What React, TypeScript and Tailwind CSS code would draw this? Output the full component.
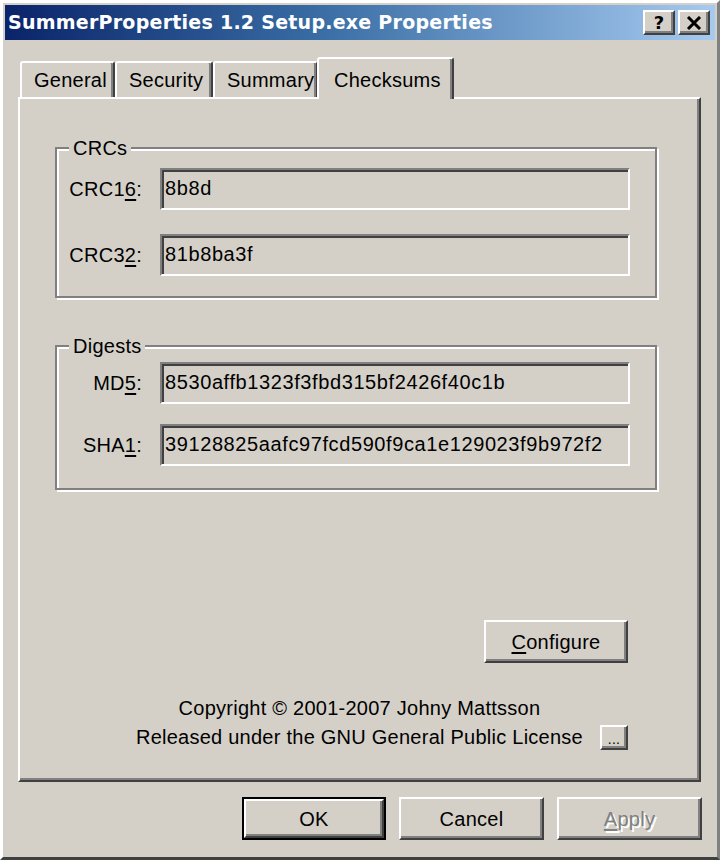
const raised =
  "border-2 border-t-white border-l-white border-b-[#404040] border-r-[#404040] shadow-[inset_-2px_-2px_0_#808080] bg-[#d4d0c8]";
const sunken =
  "border-2 border-t-[#808080] border-l-[#808080] border-b-white border-r-white shadow-[inset_2px_2px_0_#404040] bg-[#d4d0c8]";
const etched =
  "relative border-2 border-[#808080] shadow-[inset_2px_2px_0_#fff,2px_2px_0_#fff]";

function Field({ label, hot, value }: { label: string; hot: string; value: string }) {
  return (
    <div className="flex items-center">
      <div className="w-[86px] text-right pr-[3px]">
        {label}
        <span className="underline underline-offset-[3px]">{hot}</span>:
      </div>
      <div className={`ml-[15px] h-[42px] w-[470px] pl-[3px] pt-[6px] leading-[24px] tracking-[0.6px] ${sunken}`}>
        {value}
      </div>
    </div>
  );
}

function Group({ title, children, className }: { title: string; children: React.ReactNode; className: string }) {
  return (
    <div className={`${etched} ${className}`}>
      <div className="absolute left-[12px] top-[-15px] bg-[#d4d0c8] px-[4px] leading-[28px]">{title}</div>
      {children}
    </div>
  );
}

export default function App() {
  const tabs = [
    { name: "General", w: "w-[95px]" },
    { name: "Security", w: "w-[98px]" },
    { name: "Summary", w: "w-[105px]" },
  ];

  return (
    <div className="w-[720px] h-[860px] bg-[#d4d0c8] border-[3px] border-t-white border-l-white border-r-[#808080] border-b-[#404040] p-[2px] flex flex-col text-[20px] tracking-[0.25px] text-black font-['Liberation_Sans',Arial,sans-serif]">
      {/* title bar */}
      <div className="h-[35px] shrink-0 flex items-center justify-between pl-[3px] pr-[5px] bg-[linear-gradient(90deg,#0a246a_0%,#3a6ea5_45%,#a6caf0_100%)]">
        <span className="text-white font-bold text-[19px] font-['DejaVu_Sans',sans-serif] tracking-[0.25px]">
          SummerProperties 1.2 Setup.exe Properties
        </span>
        <div className="flex gap-[3px]">
          <div className={`w-[32px] h-[25px] flex items-center justify-center font-bold text-[18px] leading-none font-['DejaVu_Sans',sans-serif] ${raised}`}>
            ?
          </div>
          <div className={`w-[32px] h-[25px] flex items-center justify-center ${raised}`}>
            <svg width="16" height="14" viewBox="0 0 16 14">
              <path d="M2 1 L14 13 M14 1 L2 13" stroke="#000" strokeWidth="3" />
            </svg>
          </div>
        </div>
      </div>

      {/* tabs */}
      <div className="mt-[17px] h-[40px] shrink-0 flex items-end pl-[15px]">
        {tabs.map((t) => (
          <div
            key={t.name}
            className={`${t.w} h-[36px] flex items-center pl-[12px] border-l-2 border-t-2 border-r-2 border-l-white border-t-white border-r-[#404040] shadow-[inset_-2px_0_0_#808080] rounded-t-[3px]`}
          >
            {t.name}
          </div>
        ))}
        <div className="relative z-10 -ml-[1px] -mb-[2px] w-[137px] h-[42px] flex items-start pt-[6px] pl-[15px] bg-[#d4d0c8] border-l-2 border-t-2 border-r-2 border-l-white border-t-white border-r-[#404040] shadow-[inset_-2px_0_0_#808080] rounded-t-[3px]">
          Checksums
        </div>
      </div>

      {/* panel */}
      <div className="ml-[13px] mr-[14px] h-[685px] shrink-0 border-2 border-t-white border-l-white border-b-[#404040] border-r-[#404040] shadow-[inset_-2px_-2px_0_#808080] pl-[35px] pt-[48px]">
        <div className="w-[602px] flex flex-col">
          <Group title="CRCs" className="h-[151px] pt-[19px] pl-[2px] flex flex-col gap-[24px]">
            <Field label="CRC1" hot="6" value="8b8d" />
            <Field label="CRC3" hot="2" value="81b8ba3f" />
          </Group>

          <Group title="Digests" className="mt-[47px] h-[145px] pt-[15px] pl-[2px] flex flex-col gap-[20px]">
            <Field label="MD" hot="5" value="8530affb1323f3fbd315bf2426f40c1b" />
            <Field label="SHA" hot="1" value="39128825aafc97fcd590f9ca1e129023f9b972f2" />
          </Group>

          <div className="mt-[130px] flex justify-end pr-[29px]">
            <div className={`w-[144px] h-[43px] flex items-center justify-center ${raised}`}>
              <span>
                <span className="underline underline-offset-[3px]">C</span>onfigure
              </span>
            </div>
          </div>

          <div className="mt-[31px] flex justify-end items-end pr-[29px] gap-[17px]">
            <div className="flex flex-col items-center leading-[29px]">
              <span>Copyright © 2001-2007 Johny Mattsson</span>
              <span>Released under the GNU General Public License</span>
            </div>
            <div className={`mb-[2px] w-[28px] h-[25px] flex items-end justify-center text-[14px] leading-[18px] ${raised}`}>
              ...
            </div>
          </div>
        </div>
      </div>

      {/* buttons */}
      <div className="mt-[15px] mr-[13px] flex justify-end gap-[13px]">
        <div className="w-[144px] h-[43px] border-2 border-black">
          <div className={`h-full flex items-center justify-center ${raised}`}>OK</div>
        </div>
        <div className={`w-[145px] h-[43px] flex items-center justify-center ${raised}`}>Cancel</div>
        <div className={`w-[145px] h-[43px] flex items-center justify-center text-[#808080] [text-shadow:2px_2px_0_#fff] ${raised}`}>
          <span>
            <span className="underline underline-offset-[3px]">A</span>pply
          </span>
        </div>
      </div>
    </div>
  );
}
